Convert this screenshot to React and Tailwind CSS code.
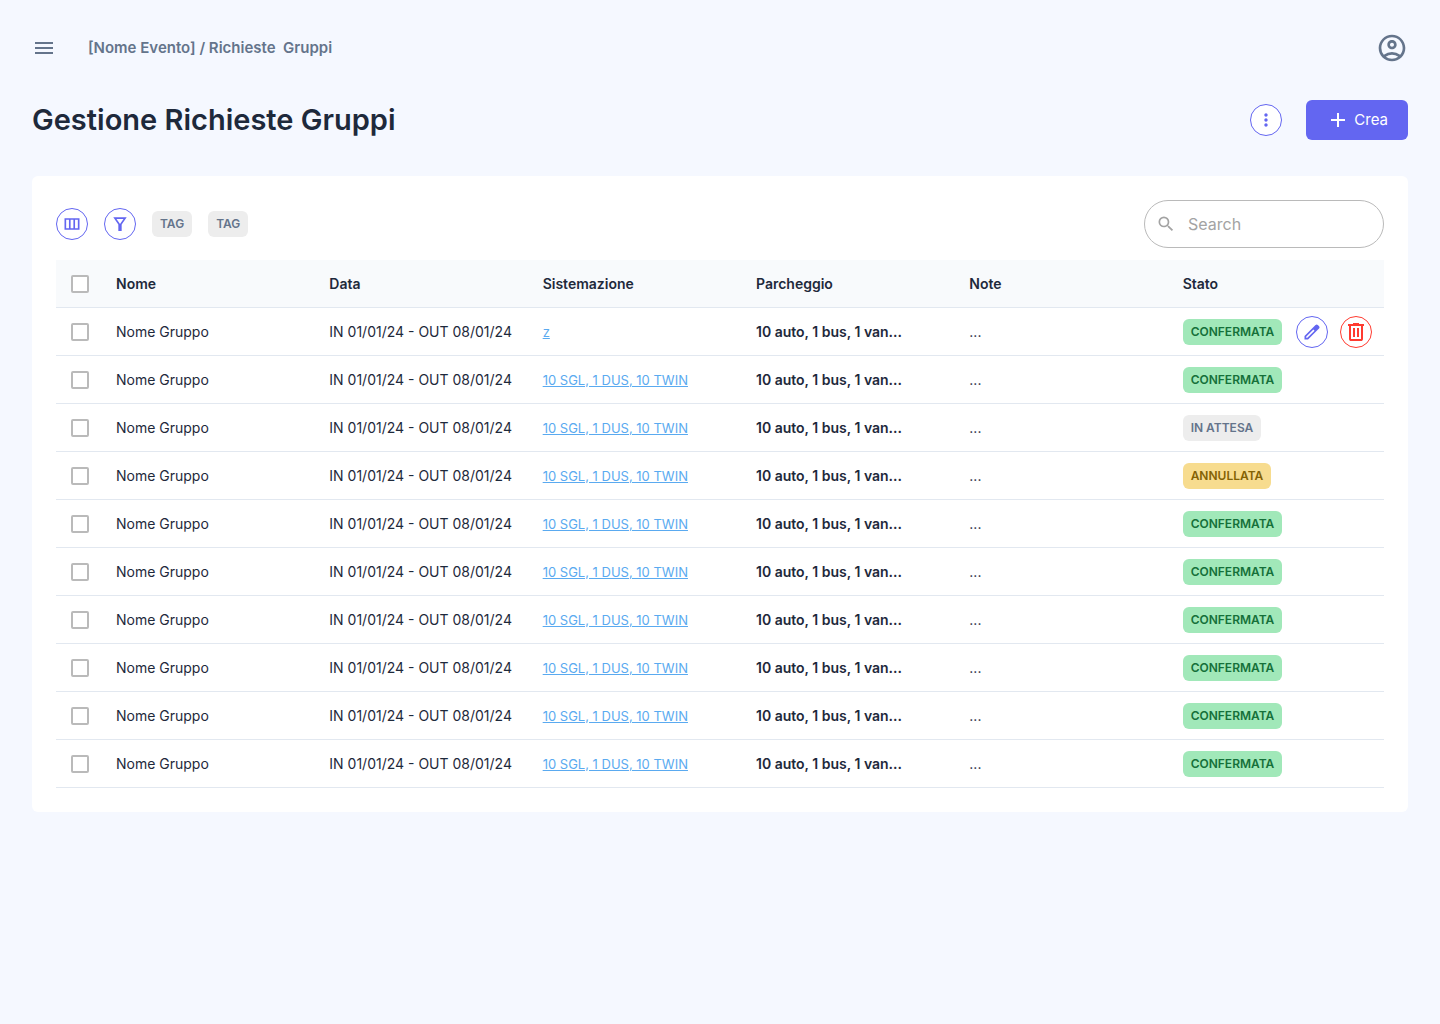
import React, { useState } from 'react';
import { MdMenu, MdOutlineAccountCircle, MdMoreVert, MdAdd, MdSearch } from 'react-icons/md';

const columns = ['Nome', 'Data', 'Sistemazione', 'Parcheggio', 'Note', 'Stato'];

const baseRow = {
  nome: 'Nome Gruppo',
  data: 'IN 01/01/24 - OUT 08/01/24',
  sistemazione: '10 SGL, 1 DUS, 10 TWIN',
  parcheggio: '10 auto, 1 bus, 1 van...',
  note: '...',
  stato: 'CONFERMATA',
};

const rows = [
  { ...baseRow, id: 1, sistemazione: 'z', actions: true },
  { ...baseRow, id: 2 },
  { ...baseRow, id: 3, stato: 'IN ATTESA' },
  { ...baseRow, id: 4, stato: 'ANNULLATA' },
  { ...baseRow, id: 5 },
  { ...baseRow, id: 6 },
  { ...baseRow, id: 7 },
  { ...baseRow, id: 8 },
  { ...baseRow, id: 9 },
  { ...baseRow, id: 10 },
];

const badgeStyles = {
  CONFERMATA: 'bg-[#a1e8b9] text-[#15703a]',
  'IN ATTESA': 'bg-[#ededed] text-[#64748b]',
  ANNULLATA: 'bg-[#f7dc8f] text-[#846204]',
  TAG: 'bg-[#ededed] text-[#64748b]',
};

const ColumnsIcon = () => (
  <svg className="h-5 w-5" viewBox="0 0 24 24" fill="currentColor" aria-hidden="true">
    <path d="M3 5h18v14H3V5Zm2 2v10h3.33V7H5Zm5.33 0v10h3.34V7h-3.34Zm5.34 0v10H19V7h-3.33Z" />
  </svg>
);

const FilterIcon = () => (
  <svg className="h-5 w-5" viewBox="0 0 24 24" fill="currentColor" aria-hidden="true">
    <path d="M3.95 4h16.1L14 12.6v7.9h-4v-7.9L3.95 4ZM12 11.9 16.2 6H7.8l4.2 5.9Z" />
  </svg>
);

const EditIcon = () => (
  <svg className="h-5 w-5" viewBox="0 0 24 24" fill="currentColor" aria-hidden="true">
    <path d="M5 19h1.4l8.625-8.625-1.4-1.4L5 17.6V19Zm-2 2v-4.25L16.2 3.575q.3-.275.663-.425t.762-.15q.4 0 .775.15t.65.45L20.425 5q.3.275.438.65T21 6.4q0 .4-.138.763t-.437.662L7.25 21H3Z" />
  </svg>
);

const TrashIcon = () => (
  <svg className="h-6 w-6" viewBox="0 0 24 24" fill="currentColor" aria-hidden="true">
    <path d="M7 21q-.825 0-1.412-.587T5 19V6H4V4h5V3h6v1h5v2h-1v13q0 .825-.587 1.413T17 21H7ZM17 6H7v13h10V6ZM9 17h2V8H9v9Zm4 0h2V8h-2v9Z" />
  </svg>
);

const RoundButton = ({ label, danger, children }) => (
  <button
    type="button"
    aria-label={label}
    className={`flex h-8 w-8 shrink-0 items-center justify-center rounded-full border bg-white ${
      danger ? 'border-[#ff3b30] text-[#ff3b30]' : 'border-[#6366f1] text-[#6366f1]'
    }`}
  >
    {children}
  </button>
);

const Badge = ({ children }) => (
  <span
    className={`inline-block rounded-md px-2 py-1 text-xs leading-[18px] font-semibold whitespace-nowrap ${badgeStyles[children]}`}
  >
    {children}
  </span>
);

const Checkbox = ({ label, checked, onChange }) => (
  <input
    type="checkbox"
    aria-label={label}
    checked={checked}
    onChange={onChange}
    className="mx-auto block h-[18px] w-[18px] appearance-none rounded-[2px] border-2 border-[#bababa] bg-white checked:border-[#6366f1] checked:bg-[#6366f1]"
  />
);

const Cell = ({ className = '', children }) => (
  <td className={`h-12 border-b border-[#e2e8f0] px-3 ${className}`}>{children}</td>
);

const App = () => {
  const [selected, setSelected] = useState([]);
  const [search, setSearch] = useState('');

  const toggleRow = (id) => {
    setSelected((prev) => (prev.includes(id) ? prev.filter((item) => item !== id) : [...prev, id]));
  };

  const allSelected = selected.length === rows.length;

  return (
    <div className="min-h-screen bg-[#f5f8ff] p-8 font-['Inter',sans-serif] text-[#1e293b]">
      {/* Top bar */}
      <header className="flex items-center justify-between">
        <div className="flex items-center gap-8 text-[#64748b]">
          <button type="button" aria-label="Menu">
            <MdMenu className="h-6 w-6" />
          </button>
          <nav className="text-[15px] leading-6 font-semibold whitespace-pre">
            {'[Nome Evento] / Richieste  Gruppi'}
          </nav>
        </div>
        <button type="button" aria-label="Account" className="text-[#64748b]">
          <MdOutlineAccountCircle className="h-8 w-8" />
        </button>
      </header>

      {/* Page title */}
      <div className="mt-9 flex items-center justify-between">
        <h1 className="text-[29px] leading-10 font-semibold">Gestione Richieste Gruppi</h1>
        <div className="flex items-center gap-6">
          <RoundButton label="Altre azioni">
            <MdMoreVert className="h-5 w-5" />
          </RoundButton>
          <button
            type="button"
            className="flex h-10 items-center gap-1 rounded-md bg-[#6366f1] px-5 text-[15px] text-white"
          >
            <MdAdd className="h-6 w-6" />
            Crea
          </button>
        </div>
      </div>

      <main className="mt-9 rounded-md bg-white p-6">
        {/* Toolbar */}
        <div className="flex items-center justify-between">
          <div className="flex items-center gap-4">
            <RoundButton label="Colonne">
              <ColumnsIcon />
            </RoundButton>
            <RoundButton label="Filtri">
              <FilterIcon />
            </RoundButton>
            <Badge>TAG</Badge>
            <Badge>TAG</Badge>
          </div>
          <label className="flex h-12 w-60 items-center gap-3 rounded-full border border-[#bababa] px-[11px] text-[#a3a3a3]">
            <MdSearch className="h-5 w-5 shrink-0" />
            <input
              type="text"
              aria-label="Search"
              placeholder="Search"
              value={search}
              onChange={(e) => setSearch(e.target.value)}
              className="w-full min-w-0 bg-transparent text-base text-[#1e293b] outline-none placeholder:text-[#a3a3a3]"
            />
          </label>
        </div>

        <table className="mt-3 w-full table-fixed border-separate border-spacing-0 text-left text-sm">
          <thead>
            <tr className="bg-[#f8fafc]">
              <th className="h-12 w-12 border-b border-[#e2e8f0]">
                <Checkbox
                  label="Seleziona tutti"
                  checked={allSelected}
                  onChange={() => setSelected(allSelected ? [] : rows.map((row) => row.id))}
                />
              </th>
              {columns.map((column) => (
                <th key={column} className="h-12 border-b border-[#e2e8f0] px-3 font-semibold">
                  {column}
                </th>
              ))}
            </tr>
          </thead>
          <tbody>
            {rows.map((row) => (
              <tr key={row.id} className="whitespace-nowrap">
                <Cell>
                  <Checkbox
                    label={`Seleziona riga ${row.id}`}
                    checked={selected.includes(row.id)}
                    onChange={() => toggleRow(row.id)}
                  />
                </Cell>
                <Cell>{row.nome}</Cell>
                <Cell>{row.data}</Cell>
                <Cell>
                  <a href="#sistemazione" className="text-[13px] text-[#5aaaf0] underline">
                    {row.sistemazione}
                  </a>
                </Cell>
                <Cell className="font-semibold">{row.parcheggio}</Cell>
                <Cell>{row.note}</Cell>
                <Cell>
                  <div className="flex items-center justify-between">
                    <Badge>{row.stato}</Badge>
                    {row.actions && (
                      <div className="flex gap-3">
                        <RoundButton label="Modifica">
                          <EditIcon />
                        </RoundButton>
                        <RoundButton label="Elimina" danger>
                          <TrashIcon />
                        </RoundButton>
                      </div>
                    )}
                  </div>
                </Cell>
              </tr>
            ))}
          </tbody>
        </table>
      </main>
    </div>
  );
};

export default App;
